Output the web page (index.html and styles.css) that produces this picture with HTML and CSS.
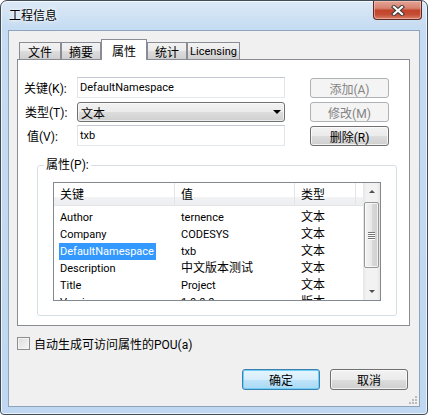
FILE: index.html
```html
<!DOCTYPE html>
<html lang="zh-CN">
<head>
  <meta charset="UTF-8" />
  <title>工程信息</title>
  <link rel="stylesheet" href="styles.css">
</head>
<body>
  <div class="window">
    <div class="titlebar">
      <span class="title">工程信息</span>
      <button class="close" title="关闭">
        <svg width="14" height="11" viewBox="0 0 14 11">
          <path d="M3 2 L11 9 M11 2 L3 9" stroke="#3b3b3b" stroke-width="4.2" stroke-linecap="square" />
          <path d="M3 2 L11 9 M11 2 L3 9" stroke="#fff" stroke-width="2.2" stroke-linecap="square" />
        </svg>
      </button>
    </div>

    <div class="client">
      <div class="tabs">
        <div class="tab t-file">文件</div>
        <div class="tab t-summary">摘要</div>
        <div class="tab t-props active">属性</div>
        <div class="tab t-stats">统计</div>
        <div class="tab t-lic latin">Licensing</div>
      </div>

      <div class="page">
        <div class="form">
          <label class="lbl">关键(K):</label>
          <div class="edit">DefaultNamespace</div>
          <button class="btn" disabled>添加(A)</button>

          <label class="lbl lbl-t">类型(T):</label>
          <div class="combo"><span>文本</span><i class="arrow"></i></div>
          <button class="btn" disabled>修改(M)</button>

          <label class="lbl lbl-v">值(V):</label>
          <div class="edit">txb</div>
          <button class="btn">删除(R)</button>
        </div>

        <fieldset class="group">
          <legend>属性(P):</legend>
          <div class="listview">
            <div class="list">
              <div class="header">
                <span class="c1">关键</span>
                <span class="c2">值</span>
                <span class="c3">类型</span>
              </div>
              <div class="rows">
                <div class="row"><span class="c1">Author</span><span class="c2">ternence</span><span class="c3">文本</span></div>
                <div class="row"><span class="c1">Company</span><span class="c2">CODESYS</span><span class="c3">文本</span></div>
                <div class="row"><span class="c1"><span class="sel">DefaultNamespace</span></span><span class="c2">txb</span><span class="c3">文本</span></div>
                <div class="row"><span class="c1">Description</span><span class="c2 zh">中文版本测试</span><span class="c3">文本</span></div>
                <div class="row"><span class="c1">Title</span><span class="c2">Project</span><span class="c3">文本</span></div>
                <div class="row"><span class="c1">Version</span><span class="c2">1.0.0.0</span><span class="c3">版本</span></div>
              </div>
            </div>
            <div class="vscroll">
              <div class="sb-btn"><i class="up"></i></div>
              <div class="thumb"><span></span><span></span><span></span><span></span></div>
              <div class="sb-track"></div>
              <div class="sb-btn"><i class="down"></i></div>
            </div>
          </div>
        </fieldset>
      </div>

      <label class="check"><span class="box"></span>自动生成可访问属性的POU(a)</label>

      <div class="actions">
        <button class="btn big default">确定</button>
        <button class="btn big">取消</button>
      </div>

      <svg class="grip" width="8" height="8" viewBox="0 0 8 8">
        <rect x="6" y="0" width="2" height="2" fill="#bcbcbc" />
        <rect x="3" y="3" width="2" height="2" fill="#bcbcbc" />
        <rect x="6" y="3" width="2" height="2" fill="#bcbcbc" />
        <rect x="0" y="6" width="2" height="2" fill="#bcbcbc" />
        <rect x="3" y="6" width="2" height="2" fill="#bcbcbc" />
        <rect x="6" y="6" width="2" height="2" fill="#bcbcbc" />
      </svg>
    </div>
  </div>
</body>
</html>
```

FILE: styles.css
```css
* {
  box-sizing: border-box;
}
body {
  margin: 0;
  font-family: "Roboto", "Noto Sans CJK SC", sans-serif;
  font-size: 12px;
  color: #000;
  background: #fff;
}
.window {
  width: 428px;
  height: 415px;
  padding: 0 7px 7px;
  display: flex;
  flex-direction: column;
  border: 1px solid #404b58;
  border-radius: 7px 7px 4px 4px;
  background: linear-gradient(180deg, #dce9f7 0, #c6dcf2 26px, #bfd7f0 100%);
  box-shadow: inset 0 0 0 1px rgba(255, 255, 255, 0.7);
}
.titlebar {
  height: 29px;
  display: flex;
  justify-content: space-between;
  align-items: flex-start;
}
.title {
  padding: 7px 0 0 1px;
  line-height: 16px;
  text-shadow: 0 0 6px #fff, 0 0 3px #fff;
}
.close {
  width: 49px;
  height: 19px;
  margin-right: -2px;
  padding: 0;
  display: flex;
  align-items: center;
  justify-content: center;
  border: 1px solid #5e2b24;
  border-top: none;
  border-radius: 0 0 4px 4px;
  background: linear-gradient(180deg, #e3a597 0, #d7826f 40%, #c2442b 52%, #c64d35 75%, #d9806a 100%);
  box-shadow: inset 0 0 0 1px rgba(255, 210, 200, 0.5);
}
.client {
  flex: 1;
  position: relative;
  display: flex;
  flex-direction: column;
  border: 1px solid #8ea4bd;
  background: #f0f0f0;
}

/* tabs */
.tabs {
  height: 28px;
  padding: 8px 0 0 10px;
  display: flex;
  align-items: flex-end;
}
.tab {
  height: 17px;
  display: flex;
  align-items: center;
  justify-content: center;
  border: 1px solid #898c95;
  border-bottom: none;
  background: linear-gradient(180deg, #f2f2f2 0, #ebebeb 50%, #dddddd 51%, #cfcfcf 100%);
}
.tab.latin {
  font-size: 11px;
}
.t-file {
  width: 42px;
}
.t-summary {
  width: 40px;
}
.t-props {
  width: 46px;
}
.t-stats {
  width: 40px;
}
.t-lic {
  width: 53px;
}
.tab.active {
  height: 21px;
  margin-bottom: -1px;
  position: relative;
  z-index: 1;
  background: #fff;
}
.page {
  width: 393px;
  height: 267px;
  margin-left: 8px;
  padding: 17px 0 0 6px;
  border: 1px solid #898c95;
  background: #fff;
}

/* form rows */
.form {
  display: grid;
  grid-template-columns: 53px 233px 79px;
  grid-auto-rows: 21px;
  row-gap: 3px;
}
.lbl {
  align-self: center;
}
.lbl-t {
  padding-left: 1px;
}
.lbl-v {
  padding-left: 3px;
}
.edit {
  width: 208px;
  padding-left: 2px;
  line-height: 19px;
  font-size: 11px;
  border: 1px solid;
  border-color: #c3c8d2 #e2e3ea #e3e9ef #e2e3ea;
  background: #fff;
}
.combo {
  width: 208px;
  height: 20px;
  align-self: end;
  padding: 0 3px;
  display: flex;
  align-items: center;
  justify-content: space-between;
  border: 1px solid #707070;
  border-radius: 3px;
  background: linear-gradient(180deg, #f2f2f2 0, #ebebeb 50%, #dddddd 51%, #cfcfcf 100%);
  box-shadow: inset 0 0 0 1px rgba(255, 255, 255, 0.6);
}
.arrow {
  width: 0;
  height: 0;
  border-left: 4px solid transparent;
  border-right: 4px solid transparent;
  border-top: 4px solid #000;
}
.btn {
  width: 79px;
  height: 20px;
  align-self: end;
  padding: 0;
  font-family: inherit;
  font-size: 12px;
  color: #000;
  border: 1px solid #707070;
  border-radius: 3px;
  background: linear-gradient(180deg, #f2f2f2 0, #ebebeb 50%, #dddddd 51%, #cfcfcf 100%);
  box-shadow: inset 0 0 0 1px rgba(255, 255, 255, 0.7);
}
.btn:disabled {
  color: #838383;
  border-color: #adb2b5;
  background: #f4f4f4;
  box-shadow: none;
}
.btn.big {
  width: 78px;
  height: 21px;
}
.btn.default {
  border-color: #3c7fb1;
  background: linear-gradient(180deg, #e5f4fc 0, #d6eefb 50%, #bfe4f9 51%, #a9d9f4 100%);
  box-shadow: inset 0 0 0 1px #6fd0f5;
}

/* group box + list */
.group {
  min-width: 0;
  margin: 12px 12px 0 13px;
  padding: 10px 15px 14px;
  border: 1px solid #d5dfe5;
  border-radius: 3px;
}
.group legend {
  margin-left: -9px;
  padding: 0 2px;
  line-height: 14px;
}
.listview {
  width: 328px;
  height: 119px;
  display: flex;
  border: 1px solid #828790;
  background: #fff;
}
.list {
  flex: 1;
  overflow: hidden;
  font-size: 11px;
}
.header {
  height: 23px;
  display: flex;
  align-items: center;
  font-size: 12px;
  border-bottom: 1px solid #e3e5e8;
  background: linear-gradient(180deg, #fff 0, #fff 65%, #f1f2f4 66%, #eceef1 100%);
}
.header span {
  height: 100%;
  line-height: 24px;
  border-right: 1px solid #e3e4e6;
}
.c1,
.c2,
.c3 {
  padding-left: 6px;
  white-space: nowrap;
  overflow: hidden;
}
.c1 {
  width: 121px;
}
.c2 {
  width: 120px;
}
.c3 {
  width: 61px;
  font-size: 12px;
}
.zh {
  font-size: 12px;
}
.rows {
  padding-top: 3px;
}
.row {
  height: 17px;
  line-height: 17px;
  display: flex;
}
.sel {
  display: inline-block;
  height: 17px;
  margin-left: -1px;
  padding: 0 2px 0 1px;
  color: #fff;
  background: #3399ff;
}
.vscroll {
  width: 17px;
  display: flex;
  flex-direction: column;
  background: linear-gradient(90deg, #e6e6e6 0, #f2f2f2 20%, #f2f2f2 80%, #e6e6e6 100%);
}
.sb-btn {
  height: 17px;
  display: flex;
  align-items: center;
  justify-content: center;
}
.sb-btn i {
  width: 0;
  height: 0;
  border-left: 3px solid transparent;
  border-right: 3px solid transparent;
}
.sb-btn .up {
  border-bottom: 3px solid #505050;
}
.sb-btn .down {
  border-top: 3px solid #505050;
}
.thumb {
  height: 66px;
  margin: 2px 1px 0;
  display: flex;
  flex-direction: column;
  align-items: center;
  justify-content: center;
  gap: 1px;
  border: 1px solid #979797;
  border-radius: 2px;
  background: linear-gradient(90deg, #f4f4f4 0, #e8e8e8 50%, #d9d9d9 51%, #cfcfcf 100%);
  box-shadow: inset 0 0 0 1px rgba(255, 255, 255, 0.7);
}
.thumb span {
  width: 7px;
  height: 1px;
  background: #777;
  box-shadow: 0 1px 0 #fff;
}
.sb-track {
  flex: 1;
}

/* bottom */
.check {
  height: 13px;
  margin: 11px 0 0 8px;
  display: flex;
  align-items: center;
  gap: 4px;
}
.box {
  width: 13px;
  height: 13px;
  border: 1px solid #8e8f8f;
  background: linear-gradient(135deg, #dcdcdc 0, #f6f6f6 100%);
  box-shadow: inset 0 0 0 1px #f4f4f4;
}
.actions {
  margin-top: 19px;
  padding-right: 11px;
  display: flex;
  justify-content: flex-end;
  gap: 10px;
}
.grip {
  position: absolute;
  right: 2px;
  bottom: 2px;
}
```
